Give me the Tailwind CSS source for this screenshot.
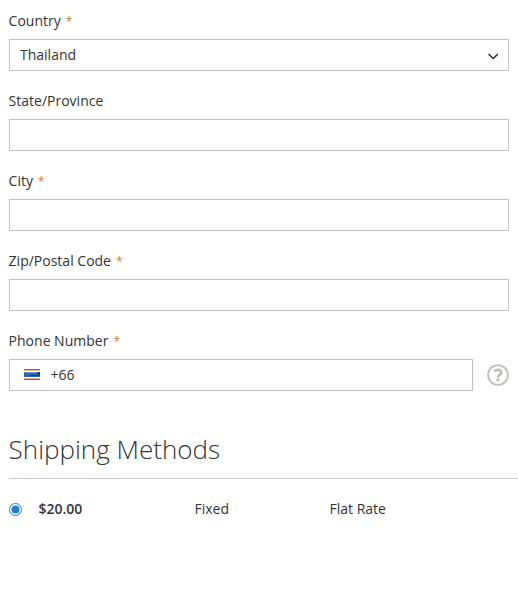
<!DOCTYPE html>
<html lang="en"><head><meta charset="utf-8"><title>Shipping</title>
<script src="https://cdn.jsdelivr.net/npm/@tailwindcss/browser@4"></script></head>
<body class="bg-white font-['Open_Sans',sans-serif] text-[14px] leading-5 text-[#333338] overflow-hidden">
<main class="pl-[9px] pt-[11px]">
<form class="flex flex-col gap-5 pr-[9px]">
<div><label class="-ml-[0.4px] block h-7">Country <span class="ml-[1.4px] text-[12px] text-[#d07a42]">*</span></label>
<div class="flex h-8 items-center justify-between border border-[#c2c2c2] pl-[10px] pr-[9px]"><span>Thailand</span>
<svg class="mt-0.5 h-[7px] w-3" viewBox="0 0 12 7" fill="none" stroke="#42203f" stroke-width="1.5"><path d="M1.5 1L6.3 5.5 11 1"/></svg></div></div>
<div><label class="-ml-[0.4px] block h-7">State/Province</label><div class="h-8 border border-[#c2c2c2]"></div></div>
<div><label class="-ml-[0.4px] block h-7">City <span class="ml-[1.4px] text-[12px] text-[#d07a42]">*</span></label><div class="h-8 border border-[#c2c2c2]"></div></div>
<div><label class="-ml-[0.4px] block h-7">Zip/Postal Code <span class="ml-[1.4px] text-[12px] text-[#d07a42]">*</span></label><div class="h-8 border border-[#c2c2c2]"></div></div>
<div><label class="-ml-[0.4px] block h-7">Phone Number <span class="ml-[1.4px] text-[12px] text-[#d07a42]">*</span></label>
<div class="flex items-center justify-between"><div class="flex h-8 w-[464px] items-center gap-[10px] border border-[#c2c2c2] pl-[14px]">
<svg class="h-3 w-4" viewBox="0 0 16 12"><path fill="#b5483b" d="M0 0h16v11H0z"/><path fill="#f0c694" d="M0 1h16v1H0z"/><path fill="#fff3df" d="M0 2h16v1H0z"/><path fill="#2968ad" d="M0 3h16v5H0z"/><path fill="#62a5dc" d="M1 3h12v1H1z"/><path fill="#203f7b" d="M6 6h10v1H6zM14 3h2v3h-2z"/><path fill="#fff" d="M0 8h16v1H0z"/><path fill="#e3b18c" d="M0 9h16v1H0z"/></svg><span class="pl-[0.5px]">+66</span></div>
<svg class="size-[22px]" viewBox="0 0 22 22" fill="none" stroke="#bfbfbb" stroke-width="1.8"><circle cx="11" cy="11" r="9.9"/><path stroke-width="2.8" d="M7.2 7.2c2.5-2 7-1.7 7 1.4 0 2.4-3.2 2.2-3.2 4.8M10.9 14.6v2.6"/></svg></div></div>
</form>
<section><h2 class="-ml-[0.4px] mt-[38px] h-[50px] border-b border-[#ccc] text-[26px] font-light leading-[40px]">Shipping Methods</h2>
<div class="mt-5 flex items-center"><svg class="mr-[16.5px] size-[13px]" viewBox="0 0 13 13"><circle cx="6.5" cy="6.5" r="6" fill="#fff" stroke="#257bc7"/><circle cx="6.5" cy="6.5" r="4" fill="#257bc7"/></svg><span class="w-[156px] font-semibold">$20.00</span><span class="w-[135px]">Fixed</span><span>Flat Rate</span></div></section>
</main></body></html>
